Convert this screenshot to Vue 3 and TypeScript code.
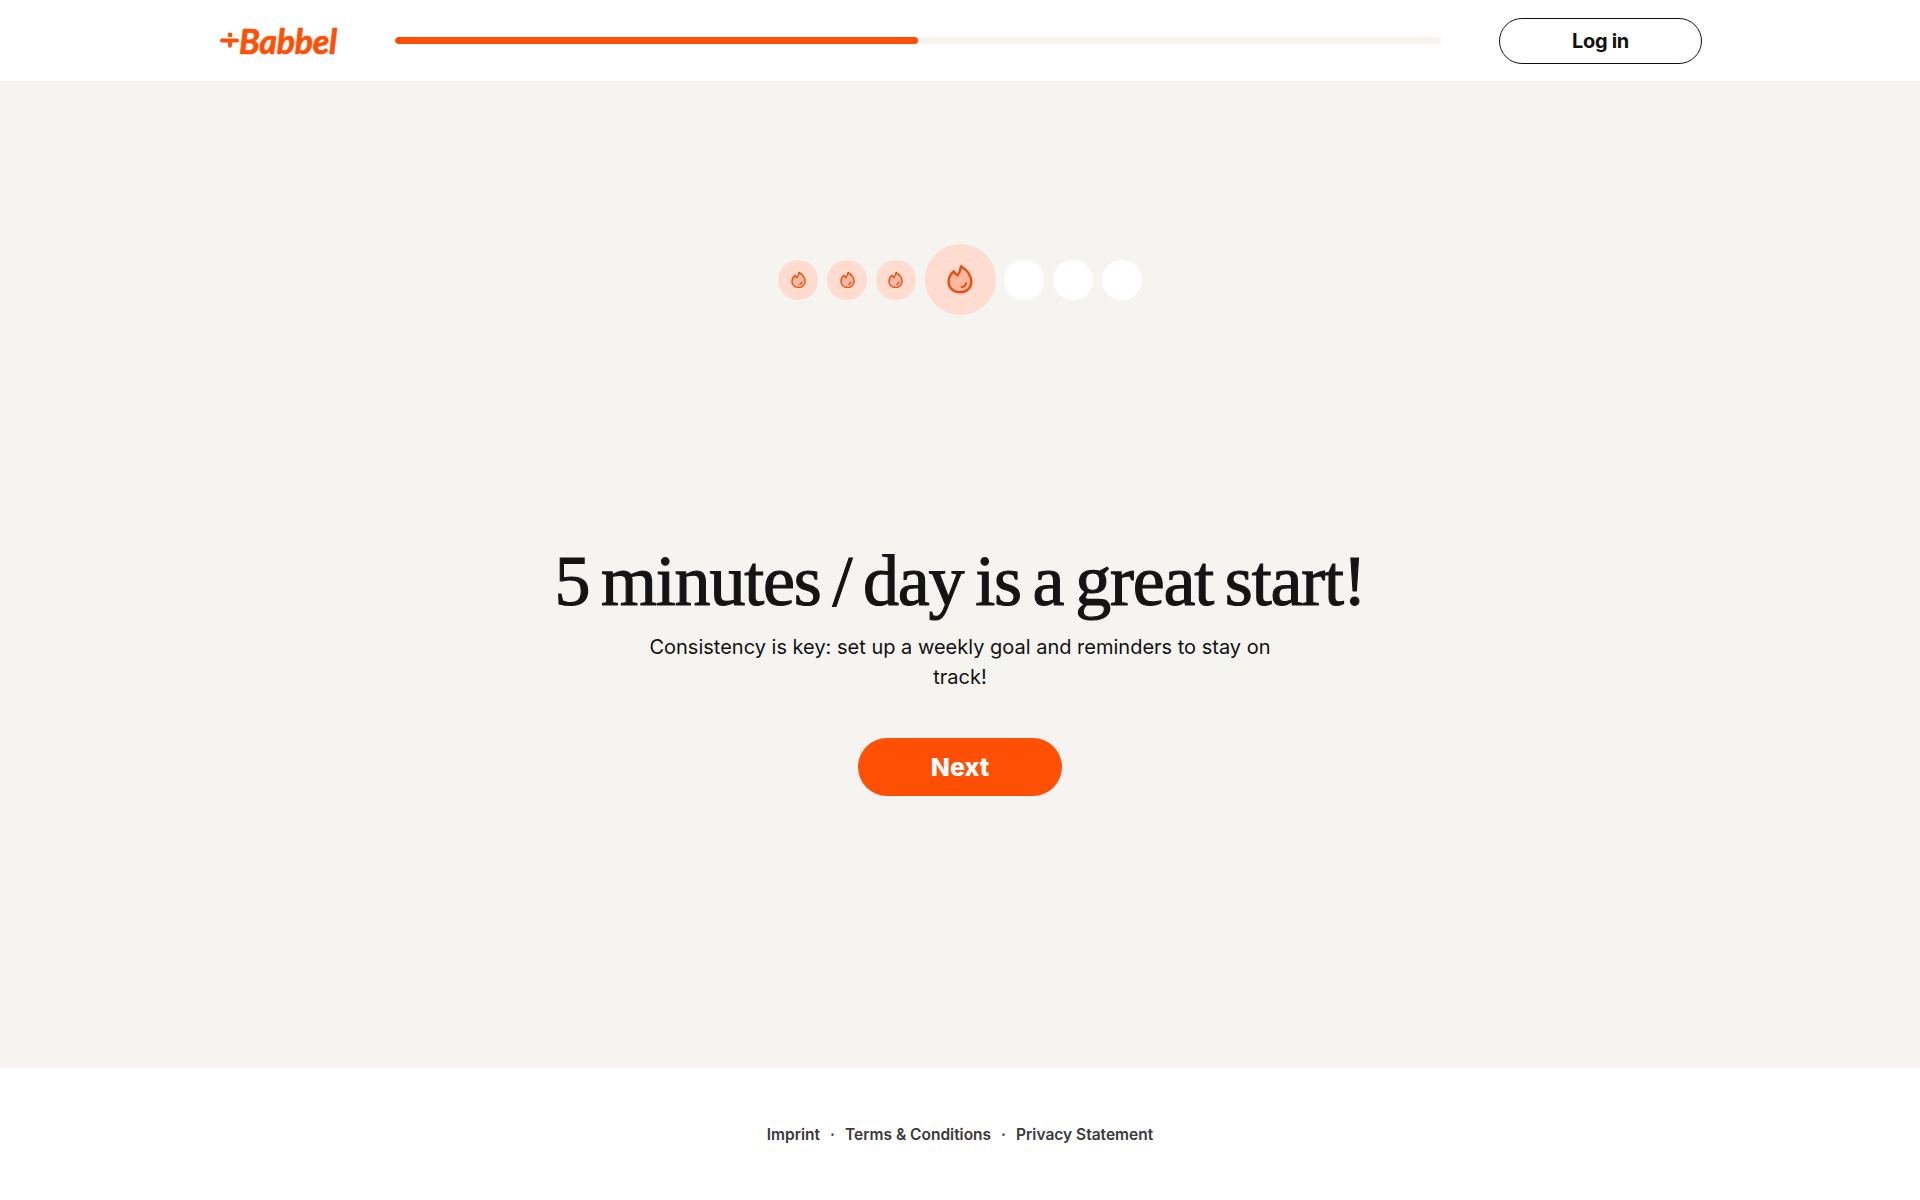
<script setup lang="ts">
const progress = 50
const days = [
  { filled: true, big: false },
  { filled: true, big: false },
  { filled: true, big: false },
  { filled: true, big: true },
  { filled: false, big: false },
  { filled: false, big: false },
  { filled: false, big: false },
]
const links = ['Imprint', 'Terms & Conditions', 'Privacy Statement']
</script>

<template>
  <div class="page">
    <header class="topbar">
      <div class="logo">
        <svg class="logo-plus" viewBox="0 0 20 20" aria-hidden="true">
          <path d="M2 10h16M10.500 10v5.500" />
          <circle cx="10.500" cy="4.200" r="2.500" />
        </svg>
        <span class="logo-word">Babbel</span>
      </div>
      <div class="track">
        <div class="track-fill" :style="{ width: progress + '%' }"></div>
      </div>
      <button class="login">Log in</button>
    </header>

    <main class="main">
      <div class="days">
        <div
          v-for="(day, i) in days"
          :key="i"
          class="day"
          :class="{ filled: day.filled, big: day.big }"
        >
          <svg v-if="day.filled" class="flame" viewBox="0 0 24 28" aria-hidden="true">
            <path
              class="flame-body"
              d="M12.900 1.800C12.600 4.500 11.400 7.800 9.700 10.200 8.200 9.200 7 8 6.300 6.400 3.300 9 1.500 12.600 1.500 16.200 1.500 21.800 6 25.800 12 25.800S22.500 21.800 22.500 16.200C22.500 10.600 18.500 5.400 12.900 1.800Z"
            />
            <path class="flame-shine" d="M17.800 17.200c-.5 2.100-2.100 3.500-4.300 4" />
          </svg>
        </div>
      </div>

      <h1 class="title">5 minutes / day is a great start!</h1>
      <p class="subtitle">Consistency is key: set up a weekly goal and reminders to stay on track!</p>
      <button class="next">Next</button>
    </main>

    <footer class="footer">
      <template v-for="(link, i) in links" :key="link">
        <span v-if="i > 0" class="dot">·</span>
        <a class="link">{{ link }}</a>
      </template>
    </footer>
  </div>
</template>

<style>
html,
body {
  margin: 0;
  background: #fff;
}
</style>

<style scoped>
.page {
  display: flex;
  flex-direction: column;
  height: 1200px;
  font-family: Inter, "Liberation Sans", sans-serif;
  color: #111;
}

.topbar {
  display: flex;
  align-items: center;
  height: 81px;
  padding: 0 218px 0 220px;
  background: #fff;
  flex-shrink: 0;
}

.logo {
  display: flex;
  align-items: center;
  width: 175px;
  color: #ff4f05;
}

.logo-plus {
  width: 19px;
  height: 19px;
}

.logo-plus path {
  fill: none;
  stroke: #ff4f05;
  stroke-width: 4;
  stroke-linecap: round;
}

.logo-plus circle {
  fill: #ff4f05;
}

.logo-word {
  font-family: Lato, sans-serif;
  font-size: 34px;
  font-weight: 700;
  font-style: italic;
  letter-spacing: -0.3px;
  line-height: 1;
  -webkit-text-stroke: 0.7px #ff4f05;
}

.track {
  width: 1046px;
  height: 7px;
  border-radius: 4px;
  background: #f5f4f0;
  overflow: hidden;
}

.track-fill {
  height: 100%;
  border-radius: 4px;
  background: #ff4f05;
}

.login {
  width: 203px;
  height: 46px;
  margin-left: 58px;
  border: 1.5px solid #111;
  border-radius: 23px;
  background: #fff;
  color: #111;
  font-family: inherit;
  font-size: 20px;
  font-weight: 700;
  letter-spacing: -0.3px;
}

.main {
  display: flex;
  flex-direction: column;
  align-items: center;
  flex: 1;
  padding-top: 163px;
  background: #f5f4f0;
}

.days {
  display: flex;
  align-items: center;
  gap: 8.75px;
  height: 71px;
}

.day {
  display: flex;
  align-items: center;
  justify-content: center;
  width: 40px;
  height: 40px;
  border-radius: 50%;
  background: #fff;
}

.day.filled {
  background: #ffdccf;
}

.day.big {
  width: 71px;
  height: 71px;
}

.flame {
  width: 15px;
  height: 18px;
}

.day.big .flame {
  width: 26px;
  height: 31px;
}

.flame-body {
  fill: #ffb8a0;
  stroke: #e8500f;
  stroke-width: 2.200;
  stroke-linejoin: round;
}

.flame-shine {
  fill: none;
  stroke: #e8500f;
  stroke-width: 1.800;
  stroke-linecap: round;
}

.title {
  margin: 231px 0 0;
  font-family: "Liberation Serif", serif;
  font-size: 72px;
  font-weight: 400;
  line-height: 70px;
  letter-spacing: -1.200px;
  word-spacing: -5px;
  color: #141414;
  -webkit-text-stroke: 1.100px #141414;
}

.subtitle {
  width: 640px;
  margin: 16px 0 0;
  font-size: 20px;
  line-height: 30px;
  text-align: center;
  color: #111;
}

.next {
  width: 204px;
  height: 58px;
  margin-top: 46px;
  border: 0;
  border-radius: 29px;
  background: #ff4f05;
  color: #fff;
  font-family: inherit;
  font-size: 25px;
  font-weight: 800;
}

.footer {
  display: flex;
  align-items: center;
  justify-content: center;
  gap: 10px;
  height: 132px;
  flex-shrink: 0;
  font-size: 15.500px;
  font-weight: 600;
  color: #3a3a3a;
  background: #fff;
}
</style>
